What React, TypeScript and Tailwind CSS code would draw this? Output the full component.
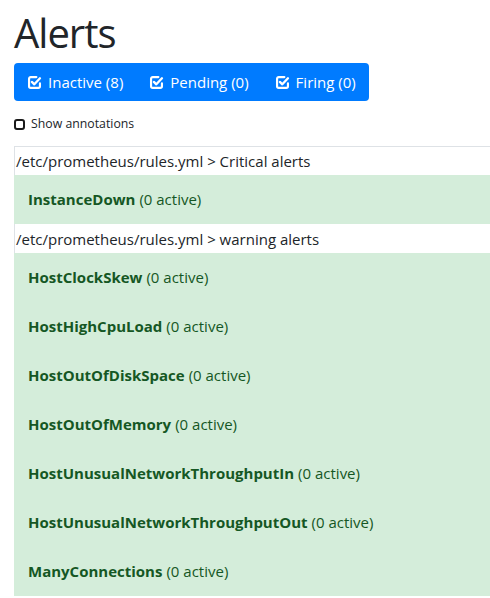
type Group = {
    file: string
    name: string
    rules: string[]
}

const groups: Group[] = [
    { file: '/etc/prometheus/rules.yml', name: 'Critical alerts', rules: ['InstanceDown'] },
    {
        file: '/etc/prometheus/rules.yml',
        name: 'warning alerts',
        rules: [
            'HostClockSkew',
            'HostHighCpuLoad',
            'HostOutOfDiskSpace',
            'HostOutOfMemory',
            'HostUnusualNetworkThroughputIn',
            'HostUnusualNetworkThroughputOut',
            'ManyConnections',
        ],
    },
]

const filters = [
    { label: 'Inactive', count: 8 },
    { label: 'Pending', count: 0 },
    { label: 'Firing', count: 0 },
]

// check-square-o style glyph
const CheckSquare = () => (
    <svg width="15" height="15" viewBox="0 0 16 16" fill="none" stroke="currentColor" strokeLinecap="round" strokeLinejoin="round">
        <path d="M10 2.2H4A1.8 1.8 0 0 0 2.2 4v8A1.8 1.8 0 0 0 4 13.8h8a1.8 1.8 0 0 0 1.8-1.8V9" strokeWidth="2.3" />
        <path d="M5.2 7.4l2.6 2.5 6-6.4" strokeWidth="2.5" />
    </svg>
)

export default function App() {
    return (
        <div className="w-[490px] h-[598px] overflow-hidden bg-white text-[#212529] font-['Open_Sans',sans-serif]">
            <div className="pl-[14px]">
                <h1 className="text-[40px] leading-[48px] font-medium pt-[9px] tracking-[-1px]">Alerts</h1>

                {/* FILTER BUTTONS */}
                <div className="mt-[6px] inline-flex rounded-[4px] bg-[#007bff] text-white">
                    {filters.map(({ label, count }) => (
                        <button
                            key={label}
                            className="flex items-center gap-[6px] h-[38px] px-[13px] text-[15px]"
                        >
                            <CheckSquare />
                            <span>
                                {label} ({count})
                            </span>
                        </button>
                    ))}
                </div>

                <label className="flex items-center gap-[6px] mt-[14px] h-[18px] text-[12.3px]">
                    <span className="w-[11px] h-[11px] border-2 border-[#1a1a1a] rounded-[3px]" />
                    Show annotations
                </label>

                {/* RULE GROUPS */}
                <div className="mt-[13px] w-[520px]">
                    {groups.map((group, gi) => (
                        <div key={group.name}>
                            <div
                                className={
                                    gi === 0
                                        ? 'h-[29px] border-t border-l border-[#dee2e6] pl-[1px] text-[15px] leading-[28px]'
                                        : 'h-[29px] border-l border-[#dee2e6] pl-[1px] pt-[1px] text-[15px] leading-[28px]'
                                }
                            >
                                {group.file} &gt; {group.name}
                            </div>
                            {group.rules.map((rule) => (
                                <div
                                    key={rule}
                                    className="h-[49px] flex items-center pl-[14px] bg-[#d4edda] text-[#155724] text-[15px]"
                                >
                                    <strong className="font-bold">{rule}</strong>
                                    <span className="ml-[4px]">(0 active)</span>
                                </div>
                            ))}
                        </div>
                    ))}
                </div>
            </div>
        </div>
    )
}
